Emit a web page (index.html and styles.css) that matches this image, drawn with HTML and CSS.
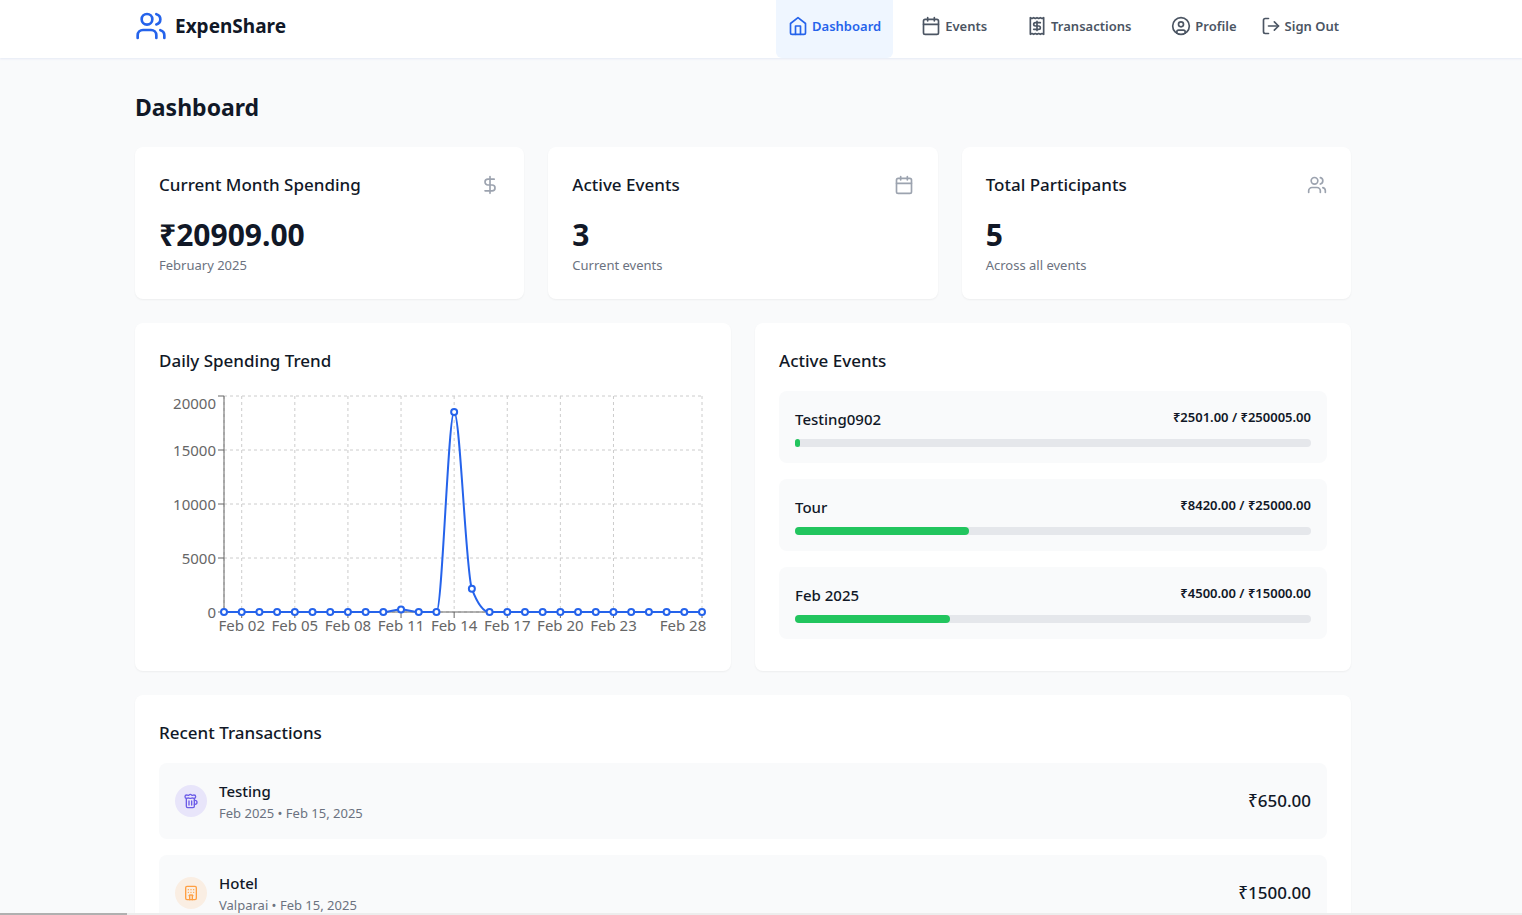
FILE: index.html
```html
<!DOCTYPE html>
<html lang="en">
<head>
  <meta charset="UTF-8">
  <meta name="viewport" content="width=device-width, initial-scale=1.0">
  <title>ExpenShare - Dashboard</title>
  <link rel="stylesheet" href="styles.css">
</head>
<body>
  <header class="navbar">
    <div class="container navbar-inner">
      <a class="brand" href="#">
        <svg class="icon icon-lg" viewBox="0 0 24 24"><path d="M16 21v-2a4 4 0 0 0-4-4H6a4 4 0 0 0-4 4v2"/><circle cx="9" cy="7" r="4"/><path d="M22 21v-2a4 4 0 0 0-3-3.87"/><path d="M16 3.13a4 4 0 0 1 0 7.75"/></svg>
        <span>ExpenShare</span>
      </a>
      <nav class="nav-links">
        <a class="nav-link active" href="#">
          <svg class="icon" viewBox="0 0 24 24"><path d="m3 9 9-7 9 7v11a2 2 0 0 1-2 2H5a2 2 0 0 1-2-2z"/><path d="M9 22V12h6v10"/></svg>
          Dashboard
        </a>
        <a class="nav-link" href="#">
          <svg class="icon" viewBox="0 0 24 24"><path d="M8 2v4"/><path d="M16 2v4"/><rect width="18" height="18" x="3" y="4" rx="2"/><path d="M3 10h18"/></svg>
          Events
        </a>
        <a class="nav-link" href="#">
          <svg class="icon" viewBox="0 0 24 24"><path d="M4 2v20l2-1 2 1 2-1 2 1 2-1 2 1 2-1 2 1V2l-2 1-2-1-2 1-2-1-2 1-2-1-2 1Z"/><path d="M16 8h-6a2 2 0 1 0 0 4h4a2 2 0 1 1 0 4H8"/><path d="M12 17.5v-11"/></svg>
          Transactions
        </a>
        <div class="nav-account">
          <a class="nav-link" href="#">
            <svg class="icon" viewBox="0 0 24 24"><circle cx="12" cy="12" r="10"/><circle cx="12" cy="10" r="3"/><path d="M7 20.662V19a2 2 0 0 1 2-2h6a2 2 0 0 1 2 2v1.662"/></svg>
            Profile
          </a>
          <button class="nav-link" type="button">
            <svg class="icon" viewBox="0 0 24 24"><path d="M9 21H5a2 2 0 0 1-2-2V5a2 2 0 0 1 2-2h4"/><path d="m16 17 5-5-5-5"/><path d="M21 12H9"/></svg>
            Sign Out
          </button>
        </div>
      </nav>
    </div>
  </header>

  <main class="container dashboard">
    <h1>Dashboard</h1>

    <section class="stats">
      <div class="card">
        <div class="card-header">
          <h2>Current Month Spending</h2>
          <svg class="icon muted" viewBox="0 0 24 24"><path d="M12 2v20"/><path d="M17 5H9.5a3.5 3.5 0 0 0 0 7h5a3.5 3.5 0 0 1 0 7H6"/></svg>
        </div>
        <p class="stat-value">₹20909.00</p>
        <p class="stat-label">February 2025</p>
      </div>
      <div class="card">
        <div class="card-header">
          <h2>Active Events</h2>
          <svg class="icon muted" viewBox="0 0 24 24"><path d="M8 2v4"/><path d="M16 2v4"/><rect width="18" height="18" x="3" y="4" rx="2"/><path d="M3 10h18"/></svg>
        </div>
        <p class="stat-value">3</p>
        <p class="stat-label">Current events</p>
      </div>
      <div class="card">
        <div class="card-header">
          <h2>Total Participants</h2>
          <svg class="icon muted" viewBox="0 0 24 24"><path d="M16 21v-2a4 4 0 0 0-4-4H6a4 4 0 0 0-4 4v2"/><circle cx="9" cy="7" r="4"/><path d="M22 21v-2a4 4 0 0 0-3-3.87"/><path d="M16 3.13a4 4 0 0 1 0 7.75"/></svg>
        </div>
        <p class="stat-value">5</p>
        <p class="stat-label">Across all events</p>
      </div>
    </section>

    <section class="panels">
      <div class="card">
        <div class="card-header">
          <h2>Daily Spending Trend</h2>
        </div>
        <svg class="chart" id="spending-chart" viewBox="0 0 548 256" role="img" aria-label="Daily spending in February"></svg>
      </div>

      <div class="card">
        <div class="card-header">
          <h2>Active Events</h2>
        </div>
        <ul class="list">
          <li class="event">
            <div class="event-header">
              <h3>Testing0902</h3>
              <span class="event-amount">₹2501.00 / ₹250005.00</span>
            </div>
            <div class="progress"><div class="progress-bar" style="width: 1%"></div></div>
          </li>
          <li class="event">
            <div class="event-header">
              <h3>Tour</h3>
              <span class="event-amount">₹8420.00 / ₹25000.00</span>
            </div>
            <div class="progress"><div class="progress-bar" style="width: 33.68%"></div></div>
          </li>
          <li class="event">
            <div class="event-header">
              <h3>Feb 2025</h3>
              <span class="event-amount">₹4500.00 / ₹15000.00</span>
            </div>
            <div class="progress"><div class="progress-bar" style="width: 30%"></div></div>
          </li>
        </ul>
      </div>
    </section>

    <section class="card">
      <div class="card-header">
        <h2>Recent Transactions</h2>
      </div>
      <ul class="list">
        <li class="transaction">
          <span class="category category-drinks">
            <svg class="icon icon-sm" viewBox="0 0 24 24"><path d="M17 11h1a3 3 0 0 1 0 6h-1"/><path d="M9 12v6"/><path d="M13 12v6"/><path d="M14 7.5c-1 0-1.44.5-3 .5s-2-.5-3-.5-1.72.5-2.5.5a2.5 2.5 0 0 1 0-5c.78 0 1.57.5 2.5.5S9.44 2 11 2s2 1.5 3 1.5 1.72-.5 2.5-.5a2.5 2.5 0 0 1 0 5c-.78 0-1.5-.5-2.5-.5Z"/><path d="M5 8v12a2 2 0 0 0 2 2h8a2 2 0 0 0 2-2V8"/></svg>
          </span>
          <div class="transaction-info">
            <h3>Testing</h3>
            <p>Feb 2025 • Feb 15, 2025</p>
          </div>
          <span class="transaction-amount">₹650.00</span>
        </li>
        <li class="transaction">
          <span class="category category-hotel">
            <svg class="icon icon-sm" viewBox="0 0 24 24"><path d="M10 22v-6.57"/><path d="M12 11h.01"/><path d="M12 7h.01"/><path d="M14 15.43V22"/><path d="M15 16a5 5 0 0 0-6 0"/><path d="M16 11h.01"/><path d="M16 7h.01"/><path d="M8 11h.01"/><path d="M8 7h.01"/><rect x="4" y="2" width="16" height="20" rx="2"/></svg>
          </span>
          <div class="transaction-info">
            <h3>Hotel</h3>
            <p>Valparai • Feb 15, 2025</p>
          </div>
          <span class="transaction-amount">₹1500.00</span>
        </li>
      </ul>
    </section>
  </main>

  <div class="scroll-track"><div class="scroll-thumb"></div></div>

  <script>
    const svg = document.getElementById('spending-chart');
    const plot = { left: 65, right: 543, top: 5, bottom: 221 };
    const maxValue = 20000;

    // Spending per day of the month, days without expenses stay at 0
    const spending = new Array(28).fill(0);
    spending[10] = 240;
    spending[13] = 18519;
    spending[14] = 2150;

    const step = (plot.right - plot.left) / (spending.length - 1);
    const xOf = i => plot.left + i * step;
    const yOf = v => plot.bottom - (v / maxValue) * (plot.bottom - plot.top);

    function add(tag, attrs, text) {
      const el = document.createElementNS('http://www.w3.org/2000/svg', tag);
      for (const key in attrs) {
        el.setAttribute(key, attrs[key]);
      }
      if (text) {
        el.textContent = text;
      }
      svg.appendChild(el);
    }

    function line(cls, x1, y1, x2, y2) {
      add('line', { class: cls, x1, y1, x2, y2 });
    }

    const days = [2, 5, 8, 11, 14, 17, 20, 23, 28];
    const amounts = [0, 5000, 10000, 15000, 20000];

    // Grid
    amounts.forEach(v => line('grid-line', plot.left, yOf(v), plot.right, yOf(v)));
    days.forEach(d => line('grid-line', xOf(d - 1), plot.top, xOf(d - 1), plot.bottom));
    line('grid-line', plot.left, plot.top, plot.left, plot.bottom);

    // Axes
    line('axis-line', plot.left, plot.bottom, plot.right, plot.bottom);
    line('axis-line', plot.left, plot.top, plot.left, plot.bottom);
    days.forEach(d => {
      const x = xOf(d - 1);
      line('axis-line', x, plot.bottom, x, plot.bottom + 6);
      // keep the last label inside the chart
      add('text', { class: 'tick', x: Math.min(x, 524), y: 240, 'text-anchor': 'middle' }, 'Feb ' + String(d).padStart(2, '0'));
    });
    amounts.forEach(v => {
      const y = yOf(v);
      line('axis-line', plot.left - 6, y, plot.left, y);
      add('text', { class: 'tick', x: 57, y: Math.max(y, 12) + 6, 'text-anchor': 'end' }, String(v));
    });

    // Monotone curve
    const points = spending.map((v, i) => [xOf(i), yOf(v)]);
    const slopes = points.slice(1).map((p, i) => (p[1] - points[i][1]) / step);
    const tangents = points.map((p, i) => {
      const a = slopes[i - 1] || 0;
      const b = slopes[i] || 0;
      if (a * b <= 0) {
        return 0;
      }
      return Math.sign(a) * 2 * Math.min(Math.abs(a), Math.abs(b), Math.abs(a + b) / 4);
    });
    let d = 'M' + points[0];
    for (let i = 1; i < points.length; i++) {
      const [x0, y0] = points[i - 1];
      const [x1, y1] = points[i];
      const dx = step / 3;
      d += `C${x0 + dx},${y0 + dx * tangents[i - 1]} ${x1 - dx},${y1 - dx * tangents[i]} ${x1},${y1}`;
    }
    add('path', { class: 'curve', d });
    points.forEach(([cx, cy]) => add('circle', { class: 'dot', cx, cy, r: 3 }));
  </script>
</body>
</html>
```
FILE: styles.css
```css
* {
  box-sizing: border-box;
  margin: 0;
  padding: 0;
}

body {
  font-family: "Noto Sans", "Open Sans", sans-serif;
  font-size: 15px;
  line-height: 24px;
  height: 100vh;
  overflow: hidden;
  background-color: #f9fafb;
  color: #111827;
}

a {
  color: inherit;
  text-decoration: none;
}

ul {
  list-style: none;
}

.container {
  max-width: 1316px;
  margin: 0 auto;
  padding: 0 68px 0 32px;
}

.icon {
  flex-shrink: 0;
  width: 20px;
  height: 20px;
  fill: none;
  stroke: currentColor;
  stroke-width: 2;
  stroke-linecap: round;
  stroke-linejoin: round;
}

.icon-lg {
  width: 32px;
  height: 32px;
  color: #2563eb;
}

.icon-sm {
  width: 16px;
  height: 16px;
}

.muted {
  color: #9ca3af;
}

/* Navbar */
.navbar {
  background-color: #fff;
  box-shadow: 0 1px 2px #e5e9f5;
}

.navbar-inner {
  display: flex;
  justify-content: space-between;
}

.brand {
  display: flex;
  align-items: center;
  gap: 8px;
  padding-bottom: 6px;
  font-size: 19px;
  font-weight: bold;
}

.nav-links {
  display: flex;
  gap: 16px;
}

.nav-account {
  display: flex;
}

.nav-link {
  display: flex;
  align-items: center;
  gap: 4px;
  height: 58px;
  padding: 0 12px 6px;
  border: none;
  border-radius: 0 0 6px 6px;
  background: none;
  font-family: inherit;
  font-size: 13px;
  font-weight: 600;
  color: #4b5563;
  cursor: pointer;
}

.nav-link.active {
  background-color: #eff6ff;
  color: #2563eb;
}

/* Dashboard */
.dashboard {
  display: flex;
  flex-direction: column;
  gap: 24px;
  padding-top: 33px;
}

h1 {
  font-size: 23px;
  line-height: 32px;
  font-weight: bold;
}

.stats {
  display: grid;
  grid-template-columns: repeat(3, 1fr);
  gap: 24px;
}

.panels {
  display: grid;
  grid-template-columns: repeat(2, 1fr);
  gap: 24px;
}

.card {
  padding: 24px;
  border-radius: 8px;
  background-color: #fff;
  box-shadow: 0 1px 2px rgba(0, 0, 0, 0.05);
}

.card-header {
  display: flex;
  justify-content: space-between;
  align-items: center;
  margin-bottom: 16px;
}

h2 {
  font-size: 17px;
  line-height: 28px;
  font-weight: 500;
}

h3 {
  font-size: 15px;
  line-height: 24px;
  font-weight: 500;
}

.stat-value {
  font-size: 30px;
  line-height: 40px;
  font-weight: bold;
}

.stat-label {
  font-size: 13px;
  line-height: 20px;
  color: #6b7280;
}

/* Chart */
.chart {
  display: block;
  width: 100%;
}

.grid-line {
  stroke: #ccc;
  stroke-dasharray: 3 3;
}

.axis-line {
  stroke: #666;
}

.tick {
  font-size: 15px;
  fill: #666;
}

.curve {
  fill: none;
  stroke: #2563eb;
  stroke-width: 2;
}

.dot {
  fill: #fff;
  stroke: #2563eb;
  stroke-width: 2;
}

/* Lists */
.list {
  display: flex;
  flex-direction: column;
  gap: 16px;
}

.event,
.transaction {
  padding: 16px;
  border-radius: 8px;
  background-color: #f9fafb;
}

.event-header {
  display: flex;
  justify-content: space-between;
  align-items: flex-start;
  margin-bottom: 8px;
}

.event-amount {
  font-size: 13px;
  line-height: 20px;
  font-weight: 600;
}

.progress {
  height: 8px;
  border-radius: 4px;
  background-color: #e5e7eb;
}

.progress-bar {
  height: 8px;
  border-radius: 4px;
  background-color: #22c55e;
}

.transaction {
  display: flex;
  align-items: center;
  gap: 12px;
}

.category {
  display: flex;
  align-items: center;
  justify-content: center;
  width: 32px;
  height: 32px;
  border-radius: 50%;
}

.category-drinks {
  background-color: #e8e5fa;
  color: #6c5ce7;
}

.category-hotel {
  background-color: #faeee3;
  color: #ff9f43;
}

.transaction-info {
  flex: 1;
}

.transaction-info p {
  font-size: 13px;
  line-height: 20px;
  color: #6b7280;
}

.transaction-amount {
  font-size: 17px;
  font-weight: 500;
}

/* Thin strip at the bottom edge of the window */
.scroll-track {
  position: fixed;
  left: 0;
  right: 0;
  bottom: 0;
  height: 2px;
  background-color: #ededed;
}

.scroll-thumb {
  width: 127px;
  height: 2px;
  background-color: #b0b0b0;
}
```
